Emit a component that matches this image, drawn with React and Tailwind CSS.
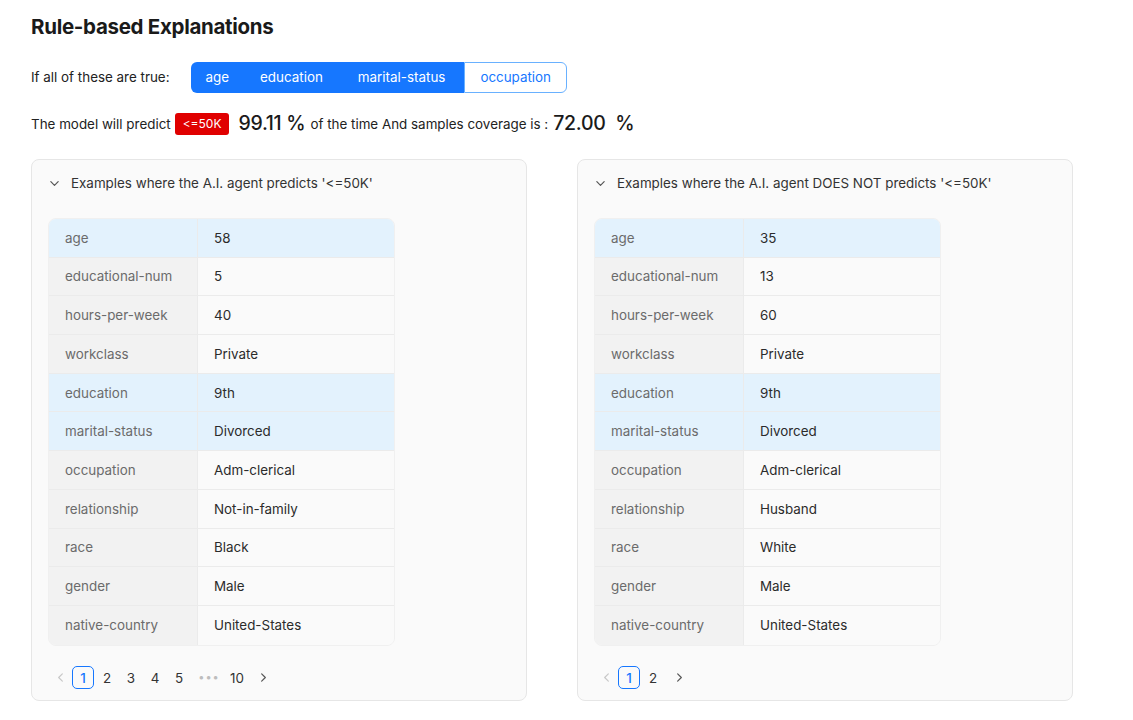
import React from "react";

const leftRows = [
  ["age", "58", true],
  ["educational-num", "5", false],
  ["hours-per-week", "40", false],
  ["workclass", "Private", false],
  ["education", "9th", true],
  ["marital-status", "Divorced", true],
  ["occupation", "Adm-clerical", false],
  ["relationship", "Not-in-family", false],
  ["race", "Black", false],
  ["gender", "Male", false],
  ["native-country", "United-States", false],
];

const rightRows = [
  ["age", "35", true],
  ["educational-num", "13", false],
  ["hours-per-week", "60", false],
  ["workclass", "Private", false],
  ["education", "9th", true],
  ["marital-status", "Divorced", true],
  ["occupation", "Adm-clerical", false],
  ["relationship", "Husband", false],
  ["race", "White", false],
  ["gender", "Male", false],
  ["native-country", "United-States", false],
];

const Chevron = ({ dir = "down", className = "" }) => {
  const d = {
    down: "M2 4l4 4 4-4",
    left: "M8 2L4 6l4 4",
    right: "M4 2l4 4-4 4",
  }[dir];
  return (
    <svg viewBox="0 0 12 12" className={className} fill="none" stroke="currentColor" strokeWidth="1.3" strokeLinecap="round" strokeLinejoin="round">
      <path d={d} />
    </svg>
  );
};

const Table = ({ rows }) => (
  <div className="w-[347px] rounded-lg overflow-hidden border border-[#f0f0f0]">
    {rows.map(([k, v, hl], i) => (
      <div
        key={k}
        className={
          "flex h-[38.7px] text-[13.4px] " +
          (i < rows.length - 1 ? "border-b border-[#ebebeb]" : "")
        }
      >
        <div
          className={
            "w-[149px] flex items-center pl-4 border-r border-[#ebebeb] text-[#6b6b6b] " +
            (hl ? "bg-[#e3f2fd]" : "bg-[#f2f2f2]")
          }
        >
          {k}
        </div>
        <div
          className={
            "flex-1 flex items-center pl-4 text-[#2b2b2b] " +
            (hl ? "bg-[#e3f2fd]" : "bg-[#fafafa]")
          }
        >
          {v}
        </div>
      </div>
    ))}
  </div>
);

const Pager = ({ pages }) => (
  <div className="flex items-center h-[24px] text-[13.4px] text-[#333]">
    <div className="w-[24px] flex justify-center text-[#c8c8c8]">
      <Chevron dir="left" className="w-[11px] h-[11px]" />
    </div>
    {pages.map((p, i) =>
      p === "..." ? (
        <div key={i} className="w-[34px] flex justify-center text-[#bdbdbd] tracking-[1px] text-[11px]">
          •••
        </div>
      ) : (
        <div
          key={i}
          className={
            "min-w-[22px] px-[4px] mr-[2px] h-[23px] flex items-center justify-center rounded-[5px] " +
            (p === "1" ? "border border-[#1677ff] text-[#1677ff] font-medium" : "")
          }
        >
          {p}
        </div>
      )
    )}
    <div className="w-[26px] flex justify-center text-[#555]">
      <Chevron dir="right" className="w-[11px] h-[11px]" />
    </div>
  </div>
);

const Card = ({ title, rows, pages }) => (
  <div className="w-[496px] h-[542px] rounded-lg border border-[#e6e6e6] bg-[#fafafa] flex flex-col">
    <div className="flex items-center h-[46px] px-4 text-[13.4px] text-[#333]">
      <Chevron dir="down" className="w-[11px] h-[11px] text-[#555] mr-[11px] ml-[1px]" />
      {title}
    </div>
    <div className="px-4 pt-[12px]">
      <Table rows={rows} />
      <div className="mt-[20px]">
        <Pager pages={pages} />
      </div>
    </div>
  </div>
);

export default function App() {
  return (
    <div className="w-[1133px] h-[720px] bg-white pl-[31px] pt-[12px] font-['Inter','Liberation_Sans',sans-serif]">
      <h1 className="text-[20.5px] font-bold text-[#1a1a1a] tracking-[-0.3px] h-[28px]">Rule-based Explanations</h1>
      <div className="flex items-center mt-[22px] h-[31px]">
        <span className="text-[13.4px] text-[#222] mr-[21px]">If all of these are true:</span>
        <div className="flex h-[31px] text-[13.4px]">
          <div className="bg-[#1677ff] text-white px-[15px] flex items-center rounded-l-md">age</div>
          <div className="bg-[#1677ff] text-white px-[16px] flex items-center">education</div>
          <div className="bg-[#1677ff] text-white px-[19px] flex items-center">marital-status</div>
          <div className="bg-white text-[#1677ff] border border-[#69b1ff] px-[15px] flex items-center rounded-r-md">occupation</div>
        </div>
      </div>
      <div className="flex items-center mt-[18px] h-[26px] text-[13.4px] text-[#222]">
        <span>The model will predict</span>
        <span className="ml-[4px] bg-[#e00000] text-white text-[12px] rounded-[3px] px-[8px] h-[22px] flex items-center">&lt;=50K</span>
        <span className="ml-[9px] text-[19.5px] font-medium text-[#1a1a1a] tracking-[-0.3px]">99.11 %</span>
        <span className="ml-[5px]">of the time And samples coverage is :</span>
        <span className="ml-[5px] text-[19.5px] font-medium text-[#1a1a1a] tracking-[-0.3px] whitespace-pre">72.00  %</span>
      </div>
      <div className="flex gap-[50px] mt-[22px]">
        <Card
          title="Examples where the A.I. agent predicts '<=50K'"
          rows={leftRows}
          pages={["1", "2", "3", "4", "5", "...", "10"]}
        />
        <Card
          title="Examples where the A.I. agent DOES NOT predicts '<=50K'"
          rows={rightRows}
          pages={["1", "2"]}
        />
      </div>
    </div>
  );
}
